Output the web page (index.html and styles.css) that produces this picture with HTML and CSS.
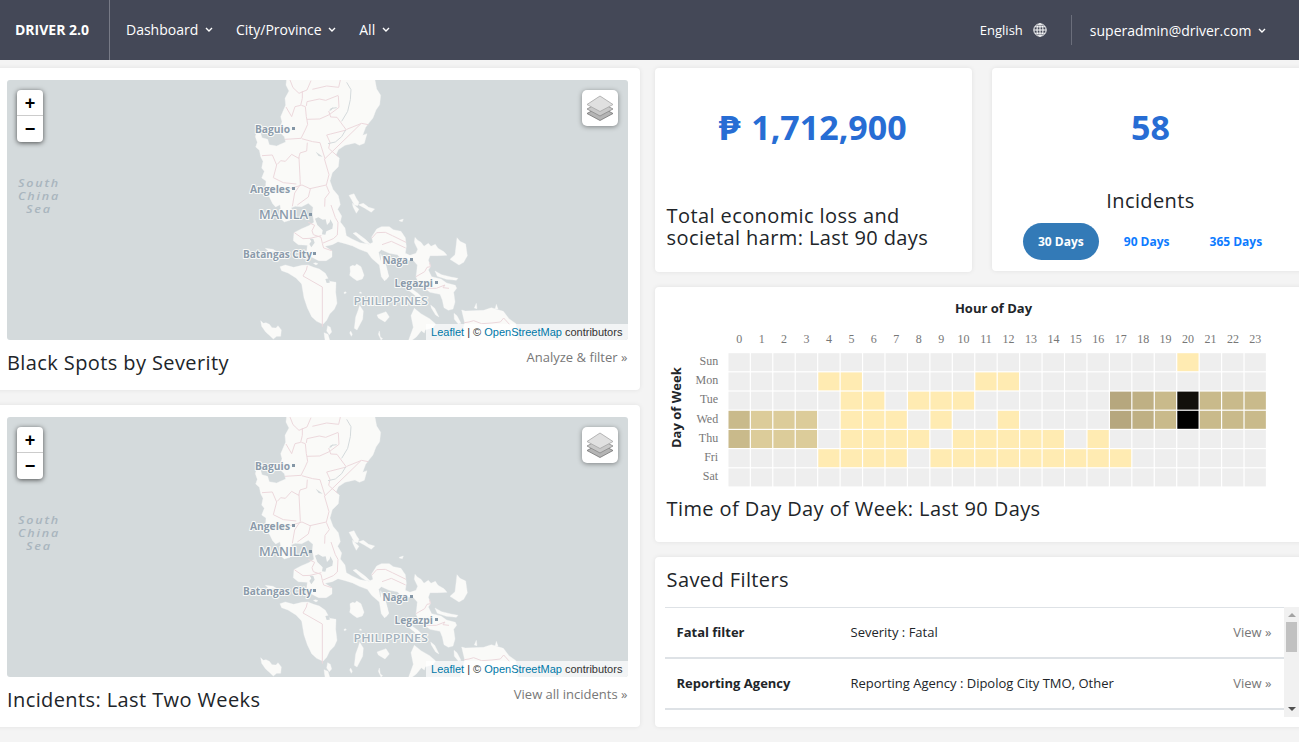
FILE: index.html
```html
<!DOCTYPE html>
<html lang="en">
<head>
<meta charset="utf-8">
<title>DRIVER 2.0</title>
<link rel="stylesheet" href="styles.css">
</head>
<body>
<svg class="defs" width="0" height="0" aria-hidden="true">
  <symbol id="chev" viewBox="0 0 8 6"><path d="M1 1l3 3 3-3" fill="none" stroke="currentColor" stroke-width="1.4"/></symbol>
  <symbol id="layers" viewBox="0 0 26 26">
    <path d="M0 18.500l13 7 13-7-13-7z" fill="#b4b4b4" stroke="#747474" stroke-width=".8"/>
    <path d="M0 14l13 7 13-7-13-7z" fill="#c8c8c8" stroke="#8a8a8a" stroke-width=".8"/>
    <path d="M0 9.500l13 7 13-7L13 1z" fill="#e0e0e0" stroke="#a6a6a6" stroke-width=".8"/>
  </symbol>
  <symbol id="map" viewBox="7 80 621 260">
    <rect x="7" y="80" width="621" height="260" fill="#d4dadc"/>
    <g transform="translate(230 75) scale(.333333)">
      <g fill="#fafaf8" stroke="#fafaf8" stroke-width="1" stroke-linejoin="round">
        <path d="M170 10L168 30 177 48 165 70 167 90 152 125 156 140 150 160 152 175 163 185 167 201 153 207 140 213 118 209 113 193 96 188 91 172 80 170 76 185 82 202 77 216 88 226 92 245 99 259 95 279 103 289 95 309 108 318 107 334 118 350 117 364 128 386 137 396 150 389 153 409 150 429 163 441 180 436 187 414 184 398 196 394 215 395 235 385 249 397 247 415 252 442 236 452 213 462 192 473 190 497 205 509 232 511 230 530 240 544 266 557 289 557 306 546 306 528 285 514 307 509 324 500 346 506 368 513 388 523 412 532 425 550 448 570 454 605 464 618 476 603 468 571 451 555 446 532 454 524 478 535 502 539 520 558 548 554 562 570 560 590 558 606 568 630 582 638 600 652 630 658 637 675 642 698 655 706 669 702 675 681 671 652 680 640 676 631 650 624 633 612 605 605 595 585 602 574 595 556 600 542 625 542 651 541 642 530 624 520 616 508 603 514 595 505 582 514 573 502 562 495 555 487 553 502 563 523 558 535 540 541 526 535 529 514 526 488 513 469 490 464 478 455 454 455 440 462 425 486 429 502 417 508 390 503 366 492 349 482 345 459 331 441 335 423 323 403 331 389 325 362 309 343 300 318 307 293 325 275 328 249 318 240 325 224 345 211 375 204 388 211 403 205 411 176 398 181 407 157 416 145 429 129 438 105 449 89 452 61 440 42 434 10Z"/>
        <path d="M150 575L166 570 191 577 216 571 234 570 251 577 268 582 286 595 299 619 318 622 317 652 321 685 313 703 299 717 290 736 279 748 260 739 245 725 232 698 222 668 215 627 198 609 174 594 155 587ZM360 575l8-4 7 2 5-6 13 8 5 14 4 12-5 11-16 5-12-8-10-8 2-11ZM389 691l11 17-2 25-17 32-8-5 4-34 8-22ZM441 720l27-10 10 16-13 15-20-12ZM92 737l8 8 8-2 10 5 8 10 12 1 6-7 10 13-2 19-12 0-10 8-12-11-11-10-12-17ZM293 752l8 5 4 14-7 8-8-11ZM282 773l12 5 5 17-14 0ZM681 488l9 11 17 8 5 35-11 20-14 8-27-17 15-14 4-33ZM553 700l20 16 26 15 18 16-9 12-22 5-3 10-9-7-15 19-27 20 18-49-7-35ZM532 632l32 23 18 18-15 0-17-16-23-18ZM602 690l12 10 13 26-10-6-13-21ZM695 705l11 3 55-2 23-8 36 11 17 22 21 15 5 49-172 0 13-52ZM357 361l15-5 8 16 7 10-4 10-10-2-9-17ZM367 385l20 18-8 12-10-20ZM385 389l15-4 16 12 18 5-10 10-21-13ZM369 475l9-3 28 21 15 14-12-1-16-10-14-13ZM452 536l14 34 10 35-8 9-14-35ZM615 588l20 11 28 7 21 4-5 6-30-3-27-9ZM672 715l9 7 12 23-8 2-12-14ZM250 565l7-2 7 3-6 4ZM342 652l5-2 2 4-6 2ZM389 651l4 0 2 4-6 0ZM362 768l5 10-3 6-5-10ZM106 520l23 3 10 6-21 2ZM448 768l3 18 7 5-5 4-8-17ZM508 436l12-4-3 8-9-2ZM733 699l6-14 2 16ZM795 704l4-16 5 14Z"/>
      </g>
      <g fill="#d4dadc">
        <path d="M255 431l10-4 13 7 9-1 4 17 8-8 2-9 8 15-2 13-18 8-3 10-10-1 2-12-16-16ZM238 490l12 2 4 11-10 14-6-10 6-8ZM203 513l15 0 4 7-12 1ZM286 612l12-2 1 13-9 1ZM257 230l13 9 8 6-12-2ZM298 103l13-7-7 10Z"/>
      </g>
      <g class="borders">
        <path d="M180 15l9 23 18 17 24-10 12-28M331 15l-5 22-36-4-43 10M217 48l0 22-5 21-17 4-10 30-17-29M214 91l12 4 3 30 4 23-8 18-12 24-48 3M229 93l2-13 37-8 19 4 38-15M325 63l2 34-29 22-29 13-38 1M296 108l6 18 19 1 28 38-47 12-12 3 10 22-4 18 27 24M392 147l-107 104-15-48-22-3-33-9M415 149l-20-4-45 18M283 251l14 48-8 31-49 11-24-11-47 14M96 242l31-2 13 30-10 38 30 15 39 4M142 268l10-11 14 2 19-21 21 12 4-16 20-6 2-25M207 247l4 81-17 26-7 40M289 331l9 22-13 17-1 25M241 342l-6 24-33 24M303 390l13 38 8 14-2 38-12 11-33 14-4-18-23-8-4-12 8-16-19-9M193 473l26 18 21-1 34-8M277 506l4 13 24 8M232 572l-3 13-10 18 58 33v119M425 490l15-17 26-1 21 10 41 20M456 509l28-10 43 20M558 605l26-15 7-13 10-2-2-12M589 640l30 0 26-10-6 8 18 2M703 743l14-2 14-4 24 9 31-2 25-3 10-12 19 21"/>
        <path class="rivers" d="M350 22l13 22-2 30-8 35-18 30M347 165l-12 20-19 16-22 5M299 108l7-8 14-2"/>
      </g>
    </g>
    <g class="place">
      <text x="255" y="132.500" textLength="35" lengthAdjust="spacingAndGlyphs">Baguio</text>
      <text x="250" y="192.500" textLength="40" lengthAdjust="spacingAndGlyphs">Angeles</text>
      <text class="big" x="259" y="218.500" textLength="49" lengthAdjust="spacingAndGlyphs">MANILA</text>
      <text x="243" y="258" textLength="69" lengthAdjust="spacingAndGlyphs">Batangas City</text>
      <text x="382.500" y="264" textLength="25.500" lengthAdjust="spacingAndGlyphs">Naga</text>
      <text x="394.500" y="287" textLength="38.500" lengthAdjust="spacingAndGlyphs">Legazpi</text>
      <text class="country" x="353.500" y="305" textLength="74.500" lengthAdjust="spacingAndGlyphs">PHILIPPINES</text>
    </g>
    <path d="M292 127h3v3h-3zM292 187h3v3h-3zM309 213h3v3h-3zM313 252h3v3h-3zM410 258h3v3h-3zM435 281h3v3h-3z" fill="#8496a6"/>
    <g class="sea">
      <text x="18" y="187" textLength="42" lengthAdjust="spacingAndGlyphs">South</text>
      <text x="18" y="200" textLength="42" lengthAdjust="spacingAndGlyphs">China</text>
      <text x="26" y="212.500" textLength="26" lengthAdjust="spacingAndGlyphs">Sea</text>
    </g>
  </symbol>
</svg>

<header class="navbar">
  <div class="brand">DRIVER 2.0</div>
  <nav class="menu">
    <a>Dashboard <svg class="chev"><use href="#chev"/></svg></a>
    <a>City/Province <svg class="chev"><use href="#chev"/></svg></a>
    <a>All <svg class="chev"><use href="#chev"/></svg></a>
  </nav>
  <div class="lang">English
    <svg class="globe" viewBox="0 0 14 14"><g fill="none" stroke="currentColor"><circle cx="7" cy="7" r="6.200"/><ellipse cx="7" cy="7" rx="3" ry="6.200"/><path d="M7 1v12M1 7h12M2 3.800h10M2 10.200h10"/></g></svg>
  </div>
  <div class="user">superadmin@driver.com <svg class="chev"><use href="#chev"/></svg></div>
</header>

<main class="board">
  <div class="col-left">
    <section class="card map-card">
      <div class="map">
        <svg class="tiles"><use href="#map"/></svg>
        <div class="zoom"><span>+</span><span>−</span></div>
        <div class="layers"><svg><use href="#layers"/></svg></div>
        <div class="credit"><a>Leaflet</a> | © <a>OpenStreetMap</a> contributors</div>
      </div>
      <div class="caption"><h5>Black Spots by Severity</h5><a class="more">Analyze &amp; filter »</a></div>
    </section>
    <section class="card map-card">
      <div class="map">
        <svg class="tiles"><use href="#map"/></svg>
        <div class="zoom"><span>+</span><span>−</span></div>
        <div class="layers"><svg><use href="#layers"/></svg></div>
        <div class="credit"><a>Leaflet</a> | © <a>OpenStreetMap</a> contributors</div>
      </div>
      <div class="caption"><h5>Incidents: Last Two Weeks</h5><a class="more">View all incidents »</a></div>
    </section>
  </div>

  <div class="col-right">
    <div class="stats">
      <section class="card loss"><div class="figure"><span class="peso">₱</span> 1,712,900</div><h5>Total economic loss and societal harm: Last 90 days</h5></section>
      <section class="card count"><div class="figure">58</div><h5>Incidents</h5>
        <div class="pills"><span class="active">30 Days</span><span>90 Days</span><span>365 Days</span></div>
      </section>
    </div>
    <section class="card toddow">
      <div class="axis-top">Hour of Day</div>
      <div class="chart"><div class="axis-left">Day of Week</div><svg id="heat" class="heat" viewBox="0 0 586 166"></svg></div>
      <h5>Time of Day Day of Week: Last 90 Days</h5>
    </section>
    <section class="card saved">
      <h5>Saved Filters</h5>
      <div class="list">
        <div class="rows">
          <div class="row"><b>Fatal filter</b><span>Severity : Fatal</span><a>View »</a></div>
          <div class="row"><b>Reporting Agency</b><span>Reporting Agency : Dipolog City TMO, Other</span><a>View »</a></div>
        </div>
        <div class="scrollbar"><i class="up"></i><i class="thumb"></i><i class="down"></i></div>
      </div>
    </section>
  </div>
</main>
<script src="heat.js"></script>
</body>
</html>
```

FILE: heat.js
```js
// One character per hour; each letter is a colour of the scale.
const rows = [
  ['Sun', '....................a...'],
  ['Mon', '....aa.....aa...........'],
  ['Tue', '.....aa.aaa......edcfccc'],
  ['Wed', 'cbbb.aaa.a..a....edcgccc'],
  ['Thu', 'cbbb.aaaa.aaaaa.a.......'],
  ['Fri', '....aaaa.aaaaaaaaa......'],
  ['Sat', '........................']
];
const colors = { '.': '#eeeeee', a: '#ffebb2', b: '#dccc9a', c: '#c9ba8b', d: '#bfb084', e: '#b6a77e', f: '#12100b', g: '#000000' };
const pw = 22.44, ph = 19.2, left = 47, top0 = 30.7;
let out = '';
for (let h = 0; h < 24; h++) out += `<text x="${left + pw * (h + .5)}" y="20.700" text-anchor="middle">${h}</text>`;
rows.forEach(([day, cells], r) => {
  out += `<text x="37.200" y="${top0 + ph * r + 12.300}" text-anchor="end">${day}</text>`;
  [...cells].forEach((c, h) => {
    out += `<rect x="${left + pw * h + .5}" y="${top0 + ph * r + .5}" width="${pw - 1.200}" height="${ph - 1.200}" fill="${colors[c]}"/>`;
  });
});
document.getElementById('heat').innerHTML = out;
```

FILE: styles.css
```css
* { box-sizing: border-box; }
body { margin: 0; width: 1299px; height: 742px; overflow: hidden; background: #f4f4f4; color: #212529; font: 13px/20px "Open Sans", "Noto Sans", sans-serif; }
.defs { position: absolute; }
h5 { margin: 0; font-size: 20px; line-height: 22px; font-weight: 400; letter-spacing: .4px; }

.navbar { height: 60px; display: flex; align-items: center; background: #444857; color: #fff; font-size: 14px; }
.brand { width: 110px; height: 60px; line-height: 60px; padding-left: 15px; border-right: 1px solid #777a86; font-weight: 700; white-space: nowrap; }
.menu { display: flex; gap: 23px; padding-left: 16px; flex: 1; }
.chev { width: 8px; height: 6px; margin-left: 3px; vertical-align: 2px; }
.lang { display: flex; align-items: center; gap: 10px; height: 30px; padding-right: 24px; border-right: 1px solid #6b6e7b; font-size: 13px; }
.globe { width: 14px; height: 14px; }
.user { padding: 2px 33px 0 18px; }

.board { display: flex; gap: 15px; padding-top: 8px; }
.col-left { width: 640px; display: flex; flex-direction: column; gap: 15px; }
.card { background: #fff; border-radius: 4px; box-shadow: 0 0 5px rgba(0,0,0,.08); }
.map-card { height: 322px; margin-left: -8px; padding: 12px 12px 0 15px; }
.map { position: relative; height: 260px; border-radius: 3px; overflow: hidden; font-family: "Liberation Sans", Arial, sans-serif; }
.tiles { display: block; width: 621px; height: 260px; }
.borders { fill: none; stroke: #ecd8dc; stroke-width: 3; stroke-linejoin: round; }
.borders .rivers { stroke: #d4dadc; }
.place { font: 700 10.5px "Open Sans", sans-serif; fill: #8b9bab; stroke: #fafaf8; stroke-width: 2px; stroke-linejoin: round; paint-order: stroke; }
.place .big { font-size: 12px; font-weight: 600; }
.place .country { font-size: 11.5px; font-weight: 600; fill: #a3b1bd; }
.sea { font: italic 600 10.5px "Open Sans", sans-serif; letter-spacing: 1.5px; fill: #a9b5be; }
.zoom { position: absolute; left: 10px; top: 10px; width: 26px; border-radius: 4px; background: #fff; box-shadow: 0 1px 5px rgba(0,0,0,.65); color: #000; font: bold 18px/26px "Liberation Sans", Arial, sans-serif; text-align: center; }
.zoom span { display: block; height: 26px; }
.zoom span:first-child { border-bottom: 1px solid #ccc; }
.layers { position: absolute; right: 10px; top: 10px; width: 36px; height: 36px; padding: 5px; border-radius: 5px; background: #fff; box-shadow: 0 1px 5px rgba(0,0,0,.4); }
.layers svg { display: block; width: 26px; height: 26px; }
.credit { position: absolute; right: 0; bottom: 0; height: 16px; padding: 0 5.6px 0 5px; background: rgba(255,255,255,.7); color: #333; font-size: 11px; line-height: 16px; white-space: nowrap; }
.credit a { color: #0078a8; }
.caption { display: flex; justify-content: space-between; padding: 12px .6px 0 0; }
.more { color: #777; margin-top: -5px; }

.col-right { width: 654px; flex: none; display: flex; flex-direction: column; gap: 15px; }
.stats { display: flex; gap: 20px; height: 204px; }
.figure { font-size: 34px; line-height: 46px; font-weight: 700; color: #276dd4; text-align: center; }
.peso { display: inline-block; line-height: 1; transform: scaleX(1.12); margin-right: 3px; }
.loss { width: 317px; padding: 36px 30px 0 11.6px; }
.loss .figure { margin: 0 -30px 55px -12px; }
.count { width: 317px; height: 203px; padding-top: 36px; text-align: center; }
.count .figure { margin-bottom: 40px; }
.pills { display: flex; gap: 10px; margin-top: 11px; padding-left: 31px; font-size: 12px; font-weight: 700; color: #0d7bff; }
.pills span { padding: 0 15px; height: 37px; line-height: 37px; border-radius: 19px; }
.pills .active { background: #337ab7; color: #fff; }
.toddow { height: 255px; padding-top: 11px; }
.axis-top { padding-left: 33px; width: 644px; text-align: center; font-weight: 700; }
.chart { display: flex; height: 172px; padding: 4px 0 0 11px; }
.axis-left { width: 20px; height: 166px; margin-top: 3px; line-height: 20px; text-align: center; font-weight: 700; writing-mode: vertical-rl; transform: rotate(180deg); }
.heat { width: 586px; height: 166px; margin-left: -5px; font: 12px "Liberation Serif", serif; fill: #777; }
.toddow h5 { padding: 8px 0 0 11.6px; }
.saved { height: 170px; padding: 12px 0 0 10px; }
.saved h5 { padding-left: 1.6px; }
.list { display: flex; height: 110px; margin-top: 16px; }
.rows { width: 619px; border-top: 1px solid #dee2e6; }
.row { display: flex; align-items: center; height: 51px; padding: 0 12.5px 2px 11.5px; border-bottom: 2px solid #dee2e6; }
.row b { width: 174px; }
.row a { margin-left: auto; color: #777; }
.scrollbar { width: 15px; background: #f1f1f1; display: flex; flex-direction: column; align-items: center; }
.scrollbar i { display: block; }
.up { margin-top: 6px; border: 4px solid transparent; border-top: 0; border-bottom-color: #a3a3a3; }
.thumb { margin-top: 5px; width: 11px; height: 30px; background: #c1c1c1; }
.down { margin-top: auto; margin-bottom: 6px; border: 4px solid transparent; border-bottom: 0; border-top-color: #505050; }
```
